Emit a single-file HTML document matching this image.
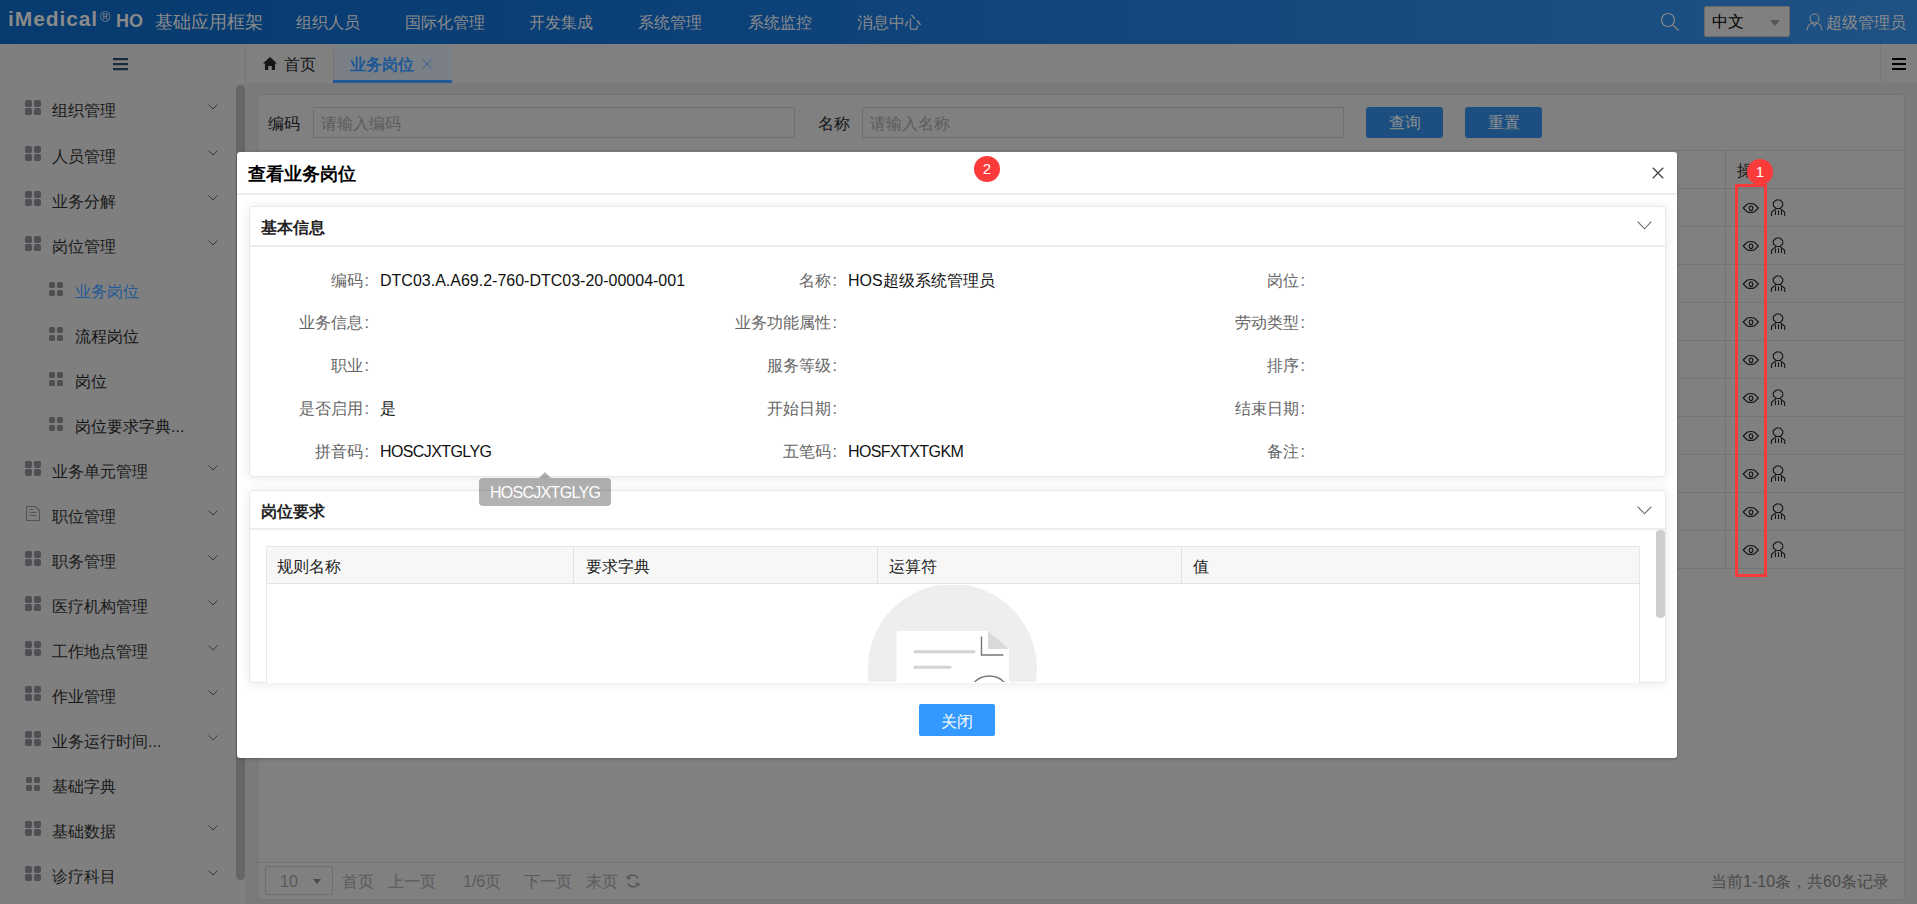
<!DOCTYPE html>
<html><head><meta charset="utf-8">
<style>
*{margin:0;padding:0;box-sizing:border-box}
html,body{width:1917px;height:904px;overflow:hidden;font-family:"Liberation Sans",sans-serif;background:#7f7f7f;position:relative}
.a{position:absolute;white-space:nowrap}
#hdr{left:0;top:0;width:1917px;height:44px;background:linear-gradient(90deg,#073a6e 0%,#0b4078 35%,#1f5183 100%)}
.hm{top:13px;font-size:16px;line-height:20px;color:#8c8c8c}
#side{left:0;top:44px;width:236px;height:860px;background:#7f7f7f}
.sb{left:236px;top:85px;width:9px;height:795px;background:#666;border-radius:5px}
.mi{font-size:16px;color:#1a1a1a;line-height:20px}
.ic{width:16px;height:15px}
.ic i{position:absolute;width:7px;height:7px;background:#4f4f53;border-radius:2px}
.ic i:nth-child(1){left:0;top:0}.ic i:nth-child(2){left:9px;top:0}.ic i:nth-child(3){left:0;top:8px}.ic i:nth-child(4){left:9px;top:8px}
.ics{width:14px;height:14px}
.ics i{position:absolute;width:6px;height:6px;background:#4f4f53;border-radius:1.5px}
.ics i:nth-child(1){left:0;top:0}.ics i:nth-child(2){left:8px;top:0}.ics i:nth-child(3){left:0;top:8px}.ics i:nth-child(4){left:8px;top:8px}
.chev{width:10px;height:6px}
#tabs{left:245px;top:44px;width:1672px;height:40px;background:#808080;border-bottom:1px solid #767676;border-left:1px solid #747474;border-top-left-radius:4px}
#content{left:245px;top:83px;width:1672px;height:821px;background:#7a7a7a}
#panel{left:257px;top:94px;width:1648px;height:806px;background:#808080;border:1px solid #747474;border-radius:3px}
.inp{height:31px;border:1px solid #6e6e6e;background:#808080;border-radius:2px;font-size:16px;color:#5c5c5c;padding-left:7px;line-height:31px}
.btn{height:31px;width:77px;background:#1c4f80;border-radius:3px;color:#8f8f8f;font-size:16px;text-align:center;line-height:32px}
.rl{left:257px;width:1648px;height:1px;background:#747474}
.eye{width:16px;height:12px}
.modal{left:237px;top:152px;width:1440px;height:606px;background:#fff;border-radius:3px;box-shadow:0 1px 3px rgba(0,0,0,.25)}
.pnl{background:#fff;border:1px solid #e9e9e9;border-radius:4px;box-shadow:0 1px 12px rgba(0,0,0,.09)}
.ptl{font-size:16px;line-height:20px;color:#222;font-weight:bold}
.lab{font-size:16px;line-height:22px;color:#666;text-align:right}
.val{font-size:16px;line-height:22px;color:#111}
.th{font-size:16px;line-height:22px;color:#222}
.badge{width:26px;height:26px;border-radius:13px;background:#fb3a3a;color:#fff;font-size:15px;line-height:25px;text-align:center}
</style></head>
<body>
<!-- header -->
<div id="hdr" class="a">
  <div class="a" style="left:8px;top:7px;font-size:21px;font-weight:bold;color:#8a8a8a;letter-spacing:0.9px;line-height:24px">iMedical</div>
  <div class="a" style="left:100px;top:10px;font-size:14px;color:#8a8a8a;line-height:14px">&reg;</div>
  <div class="a" style="left:116px;top:10px;font-size:18px;font-weight:bold;color:#8a8a8a;line-height:22px">HO</div>
  <div class="a" style="left:155px;top:11px;font-size:18px;color:#8c8c8c;line-height:22px">基础应用框架</div>
  <div class="a hm" style="left:296px">组织人员</div>
  <div class="a hm" style="left:405px">国际化管理</div>
  <div class="a hm" style="left:529px">开发集成</div>
  <div class="a hm" style="left:638px">系统管理</div>
  <div class="a hm" style="left:748px">系统监控</div>
  <div class="a hm" style="left:857px">消息中心</div>
  <svg class="a" style="left:1660px;top:12px" width="20" height="20" viewBox="0 0 20 20"><circle cx="8" cy="8" r="6.5" fill="none" stroke="#8a8a8a" stroke-width="1.2"/><line x1="12.6" y1="12.6" x2="18.5" y2="18.5" stroke="#8a8a8a" stroke-width="1.2"/></svg>
  <div class="a" style="left:1704px;top:6px;width:86px;height:31px;background:#808080;border:1px solid #6a6a6a;border-radius:2px"></div>
  <div class="a" style="left:1712px;top:12px;font-size:16px;line-height:20px;color:#000">中文</div>
  <div class="a" style="left:1770px;top:20px;width:0;height:0;border-left:5px solid transparent;border-right:5px solid transparent;border-top:6px solid #555"></div>
  <svg class="a" style="left:1806px;top:13px" width="17" height="18" viewBox="0 0 17 18"><circle cx="8.5" cy="5.5" r="4.5" fill="none" stroke="#8a8a8a" stroke-width="1.1"/><path d="M1 17.5 C1.5 12 4 10.5 6.5 10 M16 17.5 C15.5 12 13 10.5 10.5 10 M6.5 10 L8.5 13 L10.5 10" fill="none" stroke="#8a8a8a" stroke-width="1.1"/></svg>
  <div class="a hm" style="left:1826px">超级管理员</div>
</div>

<!-- sidebar -->
<div id="side" class="a"></div>
<svg class="a" style="left:113px;top:58px" width="15" height="13" viewBox="0 0 15 13"><rect x="0" y="0" width="15" height="2.2" fill="#1a2a3a"/><rect x="0" y="5" width="15" height="2.2" fill="#1a2a3a"/><rect x="0" y="10" width="15" height="2.2" fill="#1a2a3a"/></svg>
<div class="a ic" style="left:25px;top:100px"><i></i><i></i><i></i><i></i></div>
<div class="a mi" style="left:52px;top:101px">组织管理</div>
<svg class="a chev" style="left:208px;top:104px" viewBox="0 0 10 6"><path d="M0.5 0.5 L5 5 L9.5 0.5" fill="none" stroke="#3a3a3a" stroke-width="1"/></svg>
<div class="a ic" style="left:25px;top:146px"><i></i><i></i><i></i><i></i></div>
<div class="a mi" style="left:52px;top:147px">人员管理</div>
<svg class="a chev" style="left:208px;top:150px" viewBox="0 0 10 6"><path d="M0.5 0.5 L5 5 L9.5 0.5" fill="none" stroke="#3a3a3a" stroke-width="1"/></svg>
<div class="a ic" style="left:25px;top:191px"><i></i><i></i><i></i><i></i></div>
<div class="a mi" style="left:52px;top:192px">业务分解</div>
<svg class="a chev" style="left:208px;top:195px" viewBox="0 0 10 6"><path d="M0.5 0.5 L5 5 L9.5 0.5" fill="none" stroke="#3a3a3a" stroke-width="1"/></svg>
<div class="a ic" style="left:25px;top:236px"><i></i><i></i><i></i><i></i></div>
<div class="a mi" style="left:52px;top:237px">岗位管理</div>
<svg class="a chev" style="left:208px;top:240px" viewBox="0 0 10 6"><path d="M0.5 0.5 L5 5 L9.5 0.5" fill="none" stroke="#3a3a3a" stroke-width="1"/></svg>
<div class="a ics" style="left:49px;top:282px"><i></i><i></i><i></i><i></i></div>
<div class="a mi" style="left:75px;top:282px;color:#1f5a96">业务岗位</div>
<div class="a ics" style="left:49px;top:327px"><i></i><i></i><i></i><i></i></div>
<div class="a mi" style="left:75px;top:327px;color:#141414">流程岗位</div>
<div class="a ics" style="left:49px;top:372px"><i></i><i></i><i></i><i></i></div>
<div class="a mi" style="left:75px;top:372px;color:#141414">岗位</div>
<div class="a ics" style="left:49px;top:417px"><i></i><i></i><i></i><i></i></div>
<div class="a mi" style="left:75px;top:417px;color:#141414">岗位要求字典...</div>
<div class="a ic" style="left:25px;top:461px"><i></i><i></i><i></i><i></i></div>
<div class="a mi" style="left:52px;top:462px">业务单元管理</div>
<svg class="a chev" style="left:208px;top:465px" viewBox="0 0 10 6"><path d="M0.5 0.5 L5 5 L9.5 0.5" fill="none" stroke="#3a3a3a" stroke-width="1"/></svg>
<svg class="a" style="left:25px;top:505px" width="16" height="17" viewBox="0 0 16 17"><path d="M1.5 1.5 H10.5 L14.5 5.5 V15.5 H1.5 Z" fill="none" stroke="#555" stroke-width="1.1"/><path d="M4.5 7.5 H11.5 M4.5 10.5 H11.5 M4.5 4.5 H8" stroke="#555" stroke-width="1"/></svg>
<div class="a mi" style="left:52px;top:507px">职位管理</div>
<svg class="a chev" style="left:208px;top:510px" viewBox="0 0 10 6"><path d="M0.5 0.5 L5 5 L9.5 0.5" fill="none" stroke="#3a3a3a" stroke-width="1"/></svg>
<div class="a ic" style="left:25px;top:551px"><i></i><i></i><i></i><i></i></div>
<div class="a mi" style="left:52px;top:552px">职务管理</div>
<svg class="a chev" style="left:208px;top:555px" viewBox="0 0 10 6"><path d="M0.5 0.5 L5 5 L9.5 0.5" fill="none" stroke="#3a3a3a" stroke-width="1"/></svg>
<div class="a ic" style="left:25px;top:596px"><i></i><i></i><i></i><i></i></div>
<div class="a mi" style="left:52px;top:597px">医疗机构管理</div>
<svg class="a chev" style="left:208px;top:600px" viewBox="0 0 10 6"><path d="M0.5 0.5 L5 5 L9.5 0.5" fill="none" stroke="#3a3a3a" stroke-width="1"/></svg>
<div class="a ic" style="left:25px;top:641px"><i></i><i></i><i></i><i></i></div>
<div class="a mi" style="left:52px;top:642px">工作地点管理</div>
<svg class="a chev" style="left:208px;top:645px" viewBox="0 0 10 6"><path d="M0.5 0.5 L5 5 L9.5 0.5" fill="none" stroke="#3a3a3a" stroke-width="1"/></svg>
<div class="a ic" style="left:25px;top:686px"><i></i><i></i><i></i><i></i></div>
<div class="a mi" style="left:52px;top:687px">作业管理</div>
<svg class="a chev" style="left:208px;top:690px" viewBox="0 0 10 6"><path d="M0.5 0.5 L5 5 L9.5 0.5" fill="none" stroke="#3a3a3a" stroke-width="1"/></svg>
<div class="a ic" style="left:25px;top:731px"><i></i><i></i><i></i><i></i></div>
<div class="a mi" style="left:52px;top:732px">业务运行时间...</div>
<svg class="a chev" style="left:208px;top:735px" viewBox="0 0 10 6"><path d="M0.5 0.5 L5 5 L9.5 0.5" fill="none" stroke="#3a3a3a" stroke-width="1"/></svg>
<div class="a ics" style="left:26px;top:777px"><i></i><i></i><i></i><i></i></div>
<div class="a mi" style="left:52px;top:777px">基础字典</div>
<div class="a ic" style="left:25px;top:821px"><i></i><i></i><i></i><i></i></div>
<div class="a mi" style="left:52px;top:822px">基础数据</div>
<svg class="a chev" style="left:208px;top:825px" viewBox="0 0 10 6"><path d="M0.5 0.5 L5 5 L9.5 0.5" fill="none" stroke="#3a3a3a" stroke-width="1"/></svg>
<div class="a ic" style="left:25px;top:866px"><i></i><i></i><i></i><i></i></div>
<div class="a mi" style="left:52px;top:867px">诊疗科目</div>
<svg class="a chev" style="left:208px;top:870px" viewBox="0 0 10 6"><path d="M0.5 0.5 L5 5 L9.5 0.5" fill="none" stroke="#3a3a3a" stroke-width="1"/></svg>
<div class="sb a"></div>

<!-- tabs -->
<div id="tabs" class="a"></div>
<div class="a" style="left:333px;top:51px;width:1px;height:30px;background:#747474"></div>
<svg class="a" style="left:263px;top:57px" width="14" height="13" viewBox="0 0 14 13"><path d="M7 0 L14 6.5 L12 6.5 L12 13 L8.8 13 L8.8 9 L5.2 9 L5.2 13 L2 13 L2 6.5 L0 6.5 Z" fill="#151515"/></svg>
<div class="a" style="left:284px;top:55px;font-size:16px;line-height:20px;color:#151515">首页</div>
<div class="a" style="left:334px;top:45px;width:118px;height:38px;background:#7b8086"></div>
<div class="a" style="left:333px;top:80px;width:119px;height:3px;background:#1f5a96"></div>
<div class="a" style="left:350px;top:55px;font-size:16px;line-height:20px;color:#1d5896;font-weight:bold">业务岗位</div>
<svg class="a" style="left:422px;top:59px" width="10" height="10" viewBox="0 0 10 10"><path d="M0.5 0.5 L9.5 9.5 M9.5 0.5 L0.5 9.5" stroke="#2a5f9a" stroke-width="0.9"/></svg>
<div class="a" style="left:1880px;top:44px;width:1px;height:39px;background:#777"></div>
<svg class="a" style="left:1892px;top:58px" width="14" height="12" viewBox="0 0 14 12"><rect x="0" y="0" width="14" height="2" fill="#000"/><rect x="0" y="5" width="14" height="2" fill="#000"/><rect x="0" y="10" width="14" height="2" fill="#000"/></svg>

<!-- content -->
<div id="content" class="a"></div>
<div id="panel" class="a"></div>
<div class="a" style="left:268px;top:114px;font-size:16px;line-height:20px;color:#141414">编码</div>
<div class="a inp" style="left:313px;top:107px;width:482px">请输入编码</div>
<div class="a" style="left:818px;top:114px;font-size:16px;line-height:20px;color:#141414">名称</div>
<div class="a inp" style="left:862px;top:107px;width:482px">请输入名称</div>
<div class="a btn" style="left:1366px;top:107px">查询</div>
<div class="a btn" style="left:1465px;top:107px">重置</div>
<div class="a rl" style="top:150px"></div>
<div class="a rl" style="top:188px"></div>
<div class="a rl" style="top:226px"></div>
<div class="a rl" style="top:264px"></div>
<div class="a rl" style="top:302px"></div>
<div class="a rl" style="top:340px"></div>
<div class="a rl" style="top:378px"></div>
<div class="a rl" style="top:416px"></div>
<div class="a rl" style="top:454px"></div>
<div class="a rl" style="top:492px"></div>
<div class="a rl" style="top:530px"></div>
<div class="a rl" style="top:568px"></div>
<div class="a" style="left:1725px;top:150px;width:1px;height:419px;background:#747474"></div>
<div class="a" style="left:1737px;top:161px;font-size:16px;line-height:20px;color:#141414">操</div>
<svg class="a" style="left:1742px;top:202px" width="17" height="12" viewBox="0 0 17 12"><path d="M1.2 6 L5 2.3 Q8.5 0.6 12.5 2.3 L16.5 6 L12.5 9.7 Q8.5 11.4 5 9.7 Z" fill="none" stroke="#111" stroke-width="1.05"/><ellipse cx="9" cy="6.3" rx="1.8" ry="2.3" fill="none" stroke="#111" stroke-width="1.05"/></svg>
<svg class="a" style="left:1770px;top:199px" width="16" height="18" viewBox="0 0 16 18"><path d="M6.3 1 H10 L12.7 3.6 V6.8 L10.2 9.4 H6 L3.3 6.8 V3.6 Z" fill="none" stroke="#111" stroke-width="1.05"/><path d="M6 9.6 L1.5 13.3 V17 M10.2 9.6 L14.7 13.3 V17 M5.5 11.5 V16 M8.5 11.3 V16 M11.5 11.5 V16" fill="none" stroke="#111" stroke-width="1.05"/></svg>
<svg class="a" style="left:1742px;top:240px" width="17" height="12" viewBox="0 0 17 12"><path d="M1.2 6 L5 2.3 Q8.5 0.6 12.5 2.3 L16.5 6 L12.5 9.7 Q8.5 11.4 5 9.7 Z" fill="none" stroke="#111" stroke-width="1.05"/><ellipse cx="9" cy="6.3" rx="1.8" ry="2.3" fill="none" stroke="#111" stroke-width="1.05"/></svg>
<svg class="a" style="left:1770px;top:237px" width="16" height="18" viewBox="0 0 16 18"><path d="M6.3 1 H10 L12.7 3.6 V6.8 L10.2 9.4 H6 L3.3 6.8 V3.6 Z" fill="none" stroke="#111" stroke-width="1.05"/><path d="M6 9.6 L1.5 13.3 V17 M10.2 9.6 L14.7 13.3 V17 M5.5 11.5 V16 M8.5 11.3 V16 M11.5 11.5 V16" fill="none" stroke="#111" stroke-width="1.05"/></svg>
<svg class="a" style="left:1742px;top:278px" width="17" height="12" viewBox="0 0 17 12"><path d="M1.2 6 L5 2.3 Q8.5 0.6 12.5 2.3 L16.5 6 L12.5 9.7 Q8.5 11.4 5 9.7 Z" fill="none" stroke="#111" stroke-width="1.05"/><ellipse cx="9" cy="6.3" rx="1.8" ry="2.3" fill="none" stroke="#111" stroke-width="1.05"/></svg>
<svg class="a" style="left:1770px;top:275px" width="16" height="18" viewBox="0 0 16 18"><path d="M6.3 1 H10 L12.7 3.6 V6.8 L10.2 9.4 H6 L3.3 6.8 V3.6 Z" fill="none" stroke="#111" stroke-width="1.05"/><path d="M6 9.6 L1.5 13.3 V17 M10.2 9.6 L14.7 13.3 V17 M5.5 11.5 V16 M8.5 11.3 V16 M11.5 11.5 V16" fill="none" stroke="#111" stroke-width="1.05"/></svg>
<svg class="a" style="left:1742px;top:316px" width="17" height="12" viewBox="0 0 17 12"><path d="M1.2 6 L5 2.3 Q8.5 0.6 12.5 2.3 L16.5 6 L12.5 9.7 Q8.5 11.4 5 9.7 Z" fill="none" stroke="#111" stroke-width="1.05"/><ellipse cx="9" cy="6.3" rx="1.8" ry="2.3" fill="none" stroke="#111" stroke-width="1.05"/></svg>
<svg class="a" style="left:1770px;top:313px" width="16" height="18" viewBox="0 0 16 18"><path d="M6.3 1 H10 L12.7 3.6 V6.8 L10.2 9.4 H6 L3.3 6.8 V3.6 Z" fill="none" stroke="#111" stroke-width="1.05"/><path d="M6 9.6 L1.5 13.3 V17 M10.2 9.6 L14.7 13.3 V17 M5.5 11.5 V16 M8.5 11.3 V16 M11.5 11.5 V16" fill="none" stroke="#111" stroke-width="1.05"/></svg>
<svg class="a" style="left:1742px;top:354px" width="17" height="12" viewBox="0 0 17 12"><path d="M1.2 6 L5 2.3 Q8.5 0.6 12.5 2.3 L16.5 6 L12.5 9.7 Q8.5 11.4 5 9.7 Z" fill="none" stroke="#111" stroke-width="1.05"/><ellipse cx="9" cy="6.3" rx="1.8" ry="2.3" fill="none" stroke="#111" stroke-width="1.05"/></svg>
<svg class="a" style="left:1770px;top:351px" width="16" height="18" viewBox="0 0 16 18"><path d="M6.3 1 H10 L12.7 3.6 V6.8 L10.2 9.4 H6 L3.3 6.8 V3.6 Z" fill="none" stroke="#111" stroke-width="1.05"/><path d="M6 9.6 L1.5 13.3 V17 M10.2 9.6 L14.7 13.3 V17 M5.5 11.5 V16 M8.5 11.3 V16 M11.5 11.5 V16" fill="none" stroke="#111" stroke-width="1.05"/></svg>
<svg class="a" style="left:1742px;top:392px" width="17" height="12" viewBox="0 0 17 12"><path d="M1.2 6 L5 2.3 Q8.5 0.6 12.5 2.3 L16.5 6 L12.5 9.7 Q8.5 11.4 5 9.7 Z" fill="none" stroke="#111" stroke-width="1.05"/><ellipse cx="9" cy="6.3" rx="1.8" ry="2.3" fill="none" stroke="#111" stroke-width="1.05"/></svg>
<svg class="a" style="left:1770px;top:389px" width="16" height="18" viewBox="0 0 16 18"><path d="M6.3 1 H10 L12.7 3.6 V6.8 L10.2 9.4 H6 L3.3 6.8 V3.6 Z" fill="none" stroke="#111" stroke-width="1.05"/><path d="M6 9.6 L1.5 13.3 V17 M10.2 9.6 L14.7 13.3 V17 M5.5 11.5 V16 M8.5 11.3 V16 M11.5 11.5 V16" fill="none" stroke="#111" stroke-width="1.05"/></svg>
<svg class="a" style="left:1742px;top:430px" width="17" height="12" viewBox="0 0 17 12"><path d="M1.2 6 L5 2.3 Q8.5 0.6 12.5 2.3 L16.5 6 L12.5 9.7 Q8.5 11.4 5 9.7 Z" fill="none" stroke="#111" stroke-width="1.05"/><ellipse cx="9" cy="6.3" rx="1.8" ry="2.3" fill="none" stroke="#111" stroke-width="1.05"/></svg>
<svg class="a" style="left:1770px;top:427px" width="16" height="18" viewBox="0 0 16 18"><path d="M6.3 1 H10 L12.7 3.6 V6.8 L10.2 9.4 H6 L3.3 6.8 V3.6 Z" fill="none" stroke="#111" stroke-width="1.05"/><path d="M6 9.6 L1.5 13.3 V17 M10.2 9.6 L14.7 13.3 V17 M5.5 11.5 V16 M8.5 11.3 V16 M11.5 11.5 V16" fill="none" stroke="#111" stroke-width="1.05"/></svg>
<svg class="a" style="left:1742px;top:468px" width="17" height="12" viewBox="0 0 17 12"><path d="M1.2 6 L5 2.3 Q8.5 0.6 12.5 2.3 L16.5 6 L12.5 9.7 Q8.5 11.4 5 9.7 Z" fill="none" stroke="#111" stroke-width="1.05"/><ellipse cx="9" cy="6.3" rx="1.8" ry="2.3" fill="none" stroke="#111" stroke-width="1.05"/></svg>
<svg class="a" style="left:1770px;top:465px" width="16" height="18" viewBox="0 0 16 18"><path d="M6.3 1 H10 L12.7 3.6 V6.8 L10.2 9.4 H6 L3.3 6.8 V3.6 Z" fill="none" stroke="#111" stroke-width="1.05"/><path d="M6 9.6 L1.5 13.3 V17 M10.2 9.6 L14.7 13.3 V17 M5.5 11.5 V16 M8.5 11.3 V16 M11.5 11.5 V16" fill="none" stroke="#111" stroke-width="1.05"/></svg>
<svg class="a" style="left:1742px;top:506px" width="17" height="12" viewBox="0 0 17 12"><path d="M1.2 6 L5 2.3 Q8.5 0.6 12.5 2.3 L16.5 6 L12.5 9.7 Q8.5 11.4 5 9.7 Z" fill="none" stroke="#111" stroke-width="1.05"/><ellipse cx="9" cy="6.3" rx="1.8" ry="2.3" fill="none" stroke="#111" stroke-width="1.05"/></svg>
<svg class="a" style="left:1770px;top:503px" width="16" height="18" viewBox="0 0 16 18"><path d="M6.3 1 H10 L12.7 3.6 V6.8 L10.2 9.4 H6 L3.3 6.8 V3.6 Z" fill="none" stroke="#111" stroke-width="1.05"/><path d="M6 9.6 L1.5 13.3 V17 M10.2 9.6 L14.7 13.3 V17 M5.5 11.5 V16 M8.5 11.3 V16 M11.5 11.5 V16" fill="none" stroke="#111" stroke-width="1.05"/></svg>
<svg class="a" style="left:1742px;top:544px" width="17" height="12" viewBox="0 0 17 12"><path d="M1.2 6 L5 2.3 Q8.5 0.6 12.5 2.3 L16.5 6 L12.5 9.7 Q8.5 11.4 5 9.7 Z" fill="none" stroke="#111" stroke-width="1.05"/><ellipse cx="9" cy="6.3" rx="1.8" ry="2.3" fill="none" stroke="#111" stroke-width="1.05"/></svg>
<svg class="a" style="left:1770px;top:541px" width="16" height="18" viewBox="0 0 16 18"><path d="M6.3 1 H10 L12.7 3.6 V6.8 L10.2 9.4 H6 L3.3 6.8 V3.6 Z" fill="none" stroke="#111" stroke-width="1.05"/><path d="M6 9.6 L1.5 13.3 V17 M10.2 9.6 L14.7 13.3 V17 M5.5 11.5 V16 M8.5 11.3 V16 M11.5 11.5 V16" fill="none" stroke="#111" stroke-width="1.05"/></svg>

<!-- pagination -->
<div class="a rl" style="top:862px"></div>
<div class="a" style="left:265px;top:866px;width:68px;height:29px;border:1px solid #6e6e6e;border-radius:2px"></div>
<div class="a" style="left:280px;top:872px;font-size:16px;line-height:20px;color:#5a5a5a">10</div>
<div class="a" style="left:313px;top:879px;width:0;height:0;border-left:4px solid transparent;border-right:4px solid transparent;border-top:5px solid #4a4a4a"></div>
<div class="a" style="left:342px;top:872px;font-size:16px;line-height:20px;color:#5a5a5a">首页</div>
<div class="a" style="left:388px;top:872px;font-size:16px;line-height:20px;color:#5a5a5a">上一页</div>
<div class="a" style="left:463px;top:872px;font-size:16px;line-height:20px;color:#5a5a5a">1/6页</div>
<div class="a" style="left:524px;top:872px;font-size:16px;line-height:20px;color:#5a5a5a">下一页</div>
<div class="a" style="left:586px;top:872px;font-size:16px;line-height:20px;color:#5a5a5a">末页</div>
<svg class="a" style="left:625px;top:873px" width="16" height="16" viewBox="0 0 16 16"><path d="M13 5.5 A5.5 5.5 0 0 0 3 5 M3 10.5 A5.5 5.5 0 0 0 13 11" fill="none" stroke="#555" stroke-width="1.3"/><path d="M1.5 3 L3 6 L6 5" fill="none" stroke="#555" stroke-width="1.2"/><path d="M14.5 13 L13 10 L10 11" fill="none" stroke="#555" stroke-width="1.2"/></svg>
<div class="a" style="left:1711px;top:872px;font-size:16px;line-height:20px;color:#4a4a4a">当前1-10条，共60条记录</div>


<div class="modal a"></div>
<div class="a" style="left:248px;top:163px;font-size:18px;line-height:22px;font-weight:bold;color:#000">查看业务岗位</div>
<svg class="a" style="left:1652px;top:167px" width="12" height="12" viewBox="0 0 12 12"><path d="M0.8 0.8 L11.2 11.2 M11.2 0.8 L0.8 11.2" stroke="#444" stroke-width="1.3"/></svg>
<div class="a" style="left:237px;top:193px;width:1440px;height:2px;background:#ececec"></div>
<!-- panel 1 -->
<div class="a pnl" style="left:249px;top:206px;width:1417px;height:271px"></div>
<div class="a" style="left:250px;top:245px;width:1415px;height:2px;background:#ededed"></div>
<div class="a ptl" style="left:261px;top:218px">基本信息</div>
<svg class="a" style="left:1637px;top:221px" width="15" height="9" viewBox="0 0 15 9"><path d="M0.7 0.7 L7.5 7.8 L14.3 0.7" fill="none" stroke="#666" stroke-width="1.1"/></svg>
<div class="a lab" style="right:1548px;top:270px">编码<span style="margin-left:2px">:</span></div>
<div class="a val" style="left:380px;top:270px">DTC03.A.A69.2-760-DTC03-20-00004-001</div>
<div class="a lab" style="right:1080px;top:270px">名称<span style="margin-left:2px">:</span></div>
<div class="a val" style="left:848px;top:270px">HOS超级系统管理员</div>
<div class="a lab" style="right:612px;top:270px">岗位<span style="margin-left:2px">:</span></div>
<div class="a lab" style="right:1548px;top:312px">业务信息<span style="margin-left:2px">:</span></div>
<div class="a lab" style="right:1080px;top:312px">业务功能属性<span style="margin-left:2px">:</span></div>
<div class="a lab" style="right:612px;top:312px">劳动类型<span style="margin-left:2px">:</span></div>
<div class="a lab" style="right:1548px;top:355px">职业<span style="margin-left:2px">:</span></div>
<div class="a lab" style="right:1080px;top:355px">服务等级<span style="margin-left:2px">:</span></div>
<div class="a lab" style="right:612px;top:355px">排序<span style="margin-left:2px">:</span></div>
<div class="a lab" style="right:1548px;top:398px">是否启用<span style="margin-left:2px">:</span></div>
<div class="a val" style="left:380px;top:398px">是</div>
<div class="a lab" style="right:1080px;top:398px">开始日期<span style="margin-left:2px">:</span></div>
<div class="a lab" style="right:612px;top:398px">结束日期<span style="margin-left:2px">:</span></div>
<div class="a lab" style="right:1548px;top:441px">拼音码<span style="margin-left:2px">:</span></div>
<div class="a val" style="left:380px;top:441px;letter-spacing:-0.6px">HOSCJXTGLYG</div>
<div class="a lab" style="right:1080px;top:441px">五笔码<span style="margin-left:2px">:</span></div>
<div class="a val" style="left:848px;top:441px;letter-spacing:-0.6px">HOSFXTXTGKM</div>
<div class="a lab" style="right:612px;top:441px">备注<span style="margin-left:2px">:</span></div>

<!-- panel 2 -->
<div class="a pnl" style="left:249px;top:490px;width:1417px;height:193px"></div>
<div class="a" style="left:250px;top:528px;width:1415px;height:2px;background:#ededed"></div>
<div class="a ptl" style="left:261px;top:502px">岗位要求</div>
<svg class="a" style="left:1637px;top:506px" width="15" height="9" viewBox="0 0 15 9"><path d="M0.7 0.7 L7.5 7.8 L14.3 0.7" fill="none" stroke="#666" stroke-width="1.1"/></svg>
<div class="a" style="left:266px;top:546px;width:1374px;height:137px;border:1px solid #e6e6e6;border-bottom:none;background:#fff"></div>
<div class="a" style="left:267px;top:547px;width:1372px;height:37px;background:#f7f7f7;border-bottom:1px solid #e3e3e3"></div>
<div class="a" style="left:573px;top:547px;width:1px;height:37px;background:#e3e3e3"></div>
<div class="a" style="left:877px;top:547px;width:1px;height:37px;background:#e3e3e3"></div>
<div class="a" style="left:1181px;top:547px;width:1px;height:37px;background:#e3e3e3"></div>
<div class="a th" style="left:277px;top:556px">规则名称</div>
<div class="a th" style="left:586px;top:556px">要求字典</div>
<div class="a th" style="left:889px;top:556px">运算符</div>
<div class="a th" style="left:1193px;top:556px">值</div>

<div class="a" style="left:1656px;top:530px;width:9px;height:88px;background:#cdcdcd;border-radius:4px"></div>
<div class="a" style="left:267px;top:585px;width:1372px;height:97px;overflow:hidden">
<svg class="a" style="left:0;top:0" width="1372" height="97" viewBox="267 585 1372 97">
<circle cx="952.3" cy="668.5" r="84.5" fill="#eeeeee"/>
<path d="M899.5 631 H988 L1009 649 V700 H896.5 V634 A3 3 0 0 1 899.5 631 Z" fill="#fff"/>
<path d="M988 631 V649 H1009 Z" fill="#d9d9d9"/>
<path d="M981.5 636.5 V655 H1003.5" fill="none" stroke="#777" stroke-width="1.4"/>
<path d="M915 651.8 H974" stroke="#d4d4d4" stroke-width="3" stroke-linecap="round"/>
<path d="M915 667.2 H950" stroke="#d4d4d4" stroke-width="3" stroke-linecap="round"/>
<circle cx="989.3" cy="697" r="21" fill="#fff" stroke="#777" stroke-width="1.4"/>
</svg>
</div>
<!-- panel shadows bottom -->

<!-- close btn -->
<div class="a" style="left:919px;top:704px;width:76px;height:32px;background:#3399fe;border-radius:2px;color:#fff;font-size:16px;line-height:35px;text-align:center">关闭</div>
<!-- tooltip -->
<div class="a" style="left:479px;top:478px;width:132px;height:28px;background:rgba(0,0,0,.3);border-radius:4px;color:#fff;font-size:16px;line-height:29px;text-align:center;letter-spacing:-0.7px">HOSCJXTGLYG</div>
<div class="a" style="left:539px;top:472px;width:0;height:0;border-left:6px solid transparent;border-right:6px solid transparent;border-bottom:6px solid rgba(0,0,0,.3)"></div>
<!-- red highlight -->
<div class="a" style="left:1735px;top:184px;width:32px;height:393px;border:3px solid #f83a3a"></div>
<div class="a badge" style="left:1747px;top:159px">1</div>
<div class="a badge" style="left:974px;top:156px">2</div>

</body></html>
